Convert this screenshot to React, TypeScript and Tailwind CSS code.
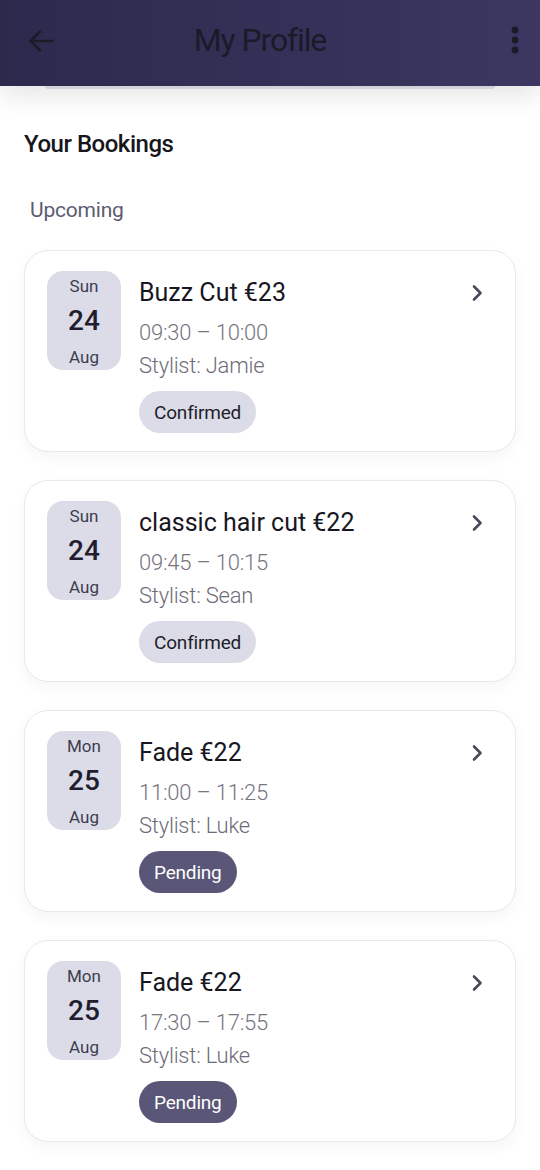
import React from "react";

type Booking = {
  dow: string;
  day: string;
  mon: string;
  title: string;
  time: string;
  stylist: string;
  status: "Confirmed" | "Pending";
};

const bookings: Booking[] = [
  { dow: "Sun", day: "24", mon: "Aug", title: "Buzz Cut €23", time: "09:30 – 10:00", stylist: "Stylist: Jamie", status: "Confirmed" },
  { dow: "Sun", day: "24", mon: "Aug", title: "classic hair cut €22", time: "09:45 – 10:15", stylist: "Stylist: Sean", status: "Confirmed" },
  { dow: "Mon", day: "25", mon: "Aug", title: "Fade €22", time: "11:00 – 11:25", stylist: "Stylist: Luke", status: "Pending" },
  { dow: "Mon", day: "25", mon: "Aug", title: "Fade €22", time: "17:30 – 17:55", stylist: "Stylist: Luke", status: "Pending" },
];

function Card({ b }: { b: Booking }) {
  return (
    <div className="flex rounded-[24px] border border-[#ebe8e5] bg-white px-[22px] pb-[18px] pt-[20px] shadow-[0_6px_16px_rgba(0,0,0,0.04)]">
      <div className="flex h-[99px] w-[74px] flex-col items-center rounded-[16px] bg-[#dcdce8] pt-[7px]">
        <div className="text-[17px] leading-none text-[#3e3c4e]">{b.dow}</div>
        <div className="mt-[12px] text-[28px] font-medium leading-none text-[#1f1d2e]">{b.day}</div>
        <div className="mt-[14px] text-[17px] leading-none text-[#3e3c4e]">{b.mon}</div>
      </div>
      <div className="ml-[18px] flex flex-1 flex-col items-start pt-[9px]">
        <div className="text-[25px] leading-none text-[#18171f]">{b.title}</div>
        <div className="mt-[17px] text-[22px] font-light leading-none tracking-[-0.01em] text-[#77757f]">{b.time}</div>
        <div className="mt-[11px] text-[22px] font-light leading-none tracking-[-0.01em] text-[#6e6c78]">{b.stylist}</div>
        {b.status === "Confirmed" ? (
          <div className="mt-[14px] flex h-[42px] items-center rounded-full bg-[#dcdce8] px-[15px] text-[19px] leading-none tracking-[-0.01em] text-[#1f1e2c]">
            Confirmed
          </div>
        ) : (
          <div className="mt-[14px] flex h-[42px] items-center rounded-full bg-[#5a5677] px-[15px] text-[19px] leading-none tracking-[-0.01em] text-white">
            Pending
          </div>
        )}
      </div>
      <div className="mr-[9px] mt-[13px]">
        <svg width="14" height="18" viewBox="0 0 14 18" fill="none">
          <path d="M4 2.5 L10.5 9 L4 15.5" stroke="#4b4a5a" strokeWidth="2.6" strokeLinecap="round" strokeLinejoin="round" />
        </svg>
      </div>
    </div>
  );
}

export default function App() {
  return (
    <div className="relative min-h-[1170px] w-[540px] overflow-hidden bg-white" style={{ fontFamily: "Roboto, 'Noto Sans', sans-serif" }}>
      <div className="relative z-10 flex h-[86px] items-center bg-gradient-to-r from-[#2b2a4d] to-[#3b3761] px-[26px] shadow-[0_10px_24px_rgba(0,0,0,0.10)]">
        <svg width="30" height="30" viewBox="0 0 30 30" fill="none" className="mb-[4px]">
          <path d="M27 15 H5 M14 5.5 L4.5 15 L14 24.5" stroke="#1c1b28" strokeWidth="2.6" strokeLinecap="round" strokeLinejoin="round" />
        </svg>
        <div className="flex-1 pb-[6px] pr-[46px] text-center text-[32px] leading-none tracking-[-0.035em] text-[#1b1a29]">My Profile</div>
        <svg width="10" height="34" viewBox="0 0 10 34" fill="none" className="mb-[6px] mr-[-6px]">
          <circle cx="5" cy="7" r="3.4" fill="#1b1a29" />
          <circle cx="5" cy="17" r="3.4" fill="#1b1a29" />
          <circle cx="5" cy="27" r="3.4" fill="#1b1a29" />
        </svg>
      </div>
      <div className="mx-[45px] h-[3px] rounded-b-[4px] bg-[#e4e2ee]" />
      <div className="px-[24px]">
        <div className="mt-[43px] text-[24px] font-medium leading-none tracking-[-0.02em] text-[#17161d]">Your Bookings</div>
        <div className="ml-[6px] mt-[44px] text-[21px] leading-none tracking-[-0.01em] text-[#5d5b70]">Upcoming</div>
        <div className="mt-[29px] flex flex-col gap-[28px]">
          {bookings.map((b, i) => (
            <Card key={i} b={b} />
          ))}
        </div>
      </div>
    </div>
  );
}
